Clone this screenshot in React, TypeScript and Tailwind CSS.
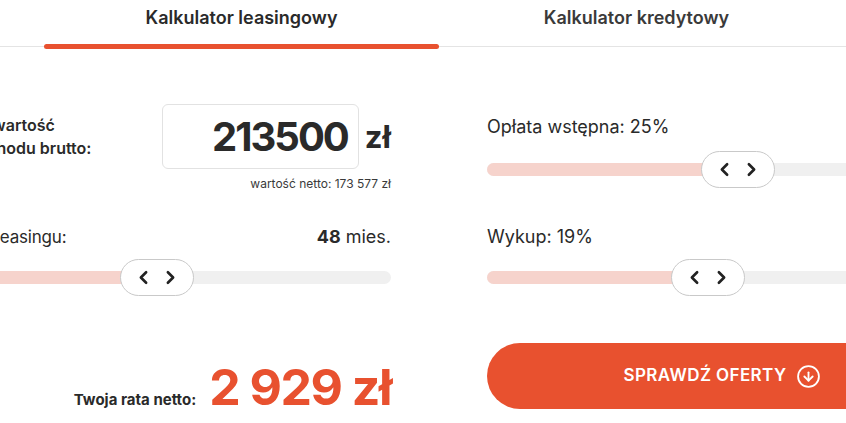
import { ChevronLeft, ChevronRight, CircleArrowDown } from "lucide-react"

const ORANGE = "#e8512f"

function Thumb() {
  return (
    <div className="absolute top-0 h-[37px] w-[74px] -translate-x-1/2 rounded-full border border-[#c9c9c9] bg-white flex items-center justify-center gap-[6px]">
      <ChevronLeft size={21} strokeWidth={3} className="text-[#222]" />
      <ChevronRight size={21} strokeWidth={3} className="text-[#222]" />
    </div>
  )
}

function Slider({ value }: { value: number }) {
  return (
    <div className="relative h-[37px] w-full">
      <div className="absolute left-0 right-0 top-[12px] h-[13px] rounded-full bg-[#f0f0f0] overflow-hidden">
        <div className="h-full bg-[#f6d3cc]" style={{ width: `${value}%` }} />
      </div>
      <div className="absolute top-0" style={{ left: `${value}%` }}>
        <Thumb />
      </div>
    </div>
  )
}

export default function App() {
  return (
    <div className="w-[846px] h-[423px] overflow-hidden bg-white text-[#2a2a2a] font-['Inter',sans-serif]">
      <div className="w-[988px] ml-[-55px]">
        {/* tabs */}
        <div className="flex justify-center h-[47px] border-b border-[#e4e4e4]">
          <div className="relative w-[395px] pt-[6px] text-center text-[18px] leading-[24px] font-semibold text-[#2a2a2a]">
            Kalkulator leasingowy
            <div className="absolute left-0 right-0 bottom-[-3px] h-[5px] rounded-full" style={{ background: ORANGE }} />
          </div>
          <div className="w-[395px] pt-[6px] text-center text-[18px] leading-[24px] font-semibold text-[#3a3a3a]">
            Kalkulator kredytowy
          </div>
        </div>

        <div className="grid grid-cols-2 gap-x-[96px]">
          {/* left column */}
          <div className="flex flex-col">
            <div className="mt-[57px] flex items-center justify-between">
              <div className="text-[16px] leading-[23px] font-semibold">
                Podaj wartość
                <br />
                samochodu brutto:
              </div>
              <div className="flex items-center">
                <div className="h-[65px] w-[197px] rounded-md border border-[#e2e2e2] flex items-center justify-end pr-[10px] text-[40px] font-bold leading-none tracking-[-2px]">
                  213500
                </div>
                <span className="ml-[6px] text-[31px] font-bold leading-none">zł</span>
              </div>
            </div>
            <div className="mt-[7px] text-right text-[12px] leading-[16px] text-[#3a3a3a]">
              wartość netto: 173 577 zł
            </div>
            <div className="mt-[33px] flex justify-between text-[18px] leading-[24px]">
              <span className="text-[17px] tracking-[-0.2px]">Okres leasingu:</span>
              <span>
                <span className="font-bold">48</span> mies.
              </span>
            </div>
            <div className="mt-[10px]">
              <Slider value={47.5} />
            </div>
            <div className="mt-[66px] flex items-baseline justify-end gap-[13px]">
              <span className="text-[15px] font-bold">Twoja rata netto:</span>
              <span className="text-[50px] font-bold leading-none tracking-[-1.5px]" style={{ color: ORANGE }}>
                2 929 zł
              </span>
            </div>
          </div>

          {/* right column */}
          <div className="flex flex-col">
            <div className="mt-[68px] text-[18px] leading-[24px]">Opłata wstępna: 25%</div>
            <div className="mt-[12px]">
              <Slider value={56.2} />
            </div>
            <div className="mt-[37px] text-[18px] leading-[24px]">Wykup: 19%</div>
            <div className="mt-[10px]">
              <Slider value={49.6} />
            </div>
            <button
              className="mt-[47px] h-[66px] w-full rounded-full flex items-center justify-center gap-[10px] pl-[25px] text-white text-[17px] font-semibold tracking-[0.4px]"
              style={{ background: ORANGE }}
            >
              SPRAWDŹ OFERTY
              <CircleArrowDown size={25} strokeWidth={1.75} />
            </button>
          </div>
        </div>
      </div>
    </div>
  )
}
